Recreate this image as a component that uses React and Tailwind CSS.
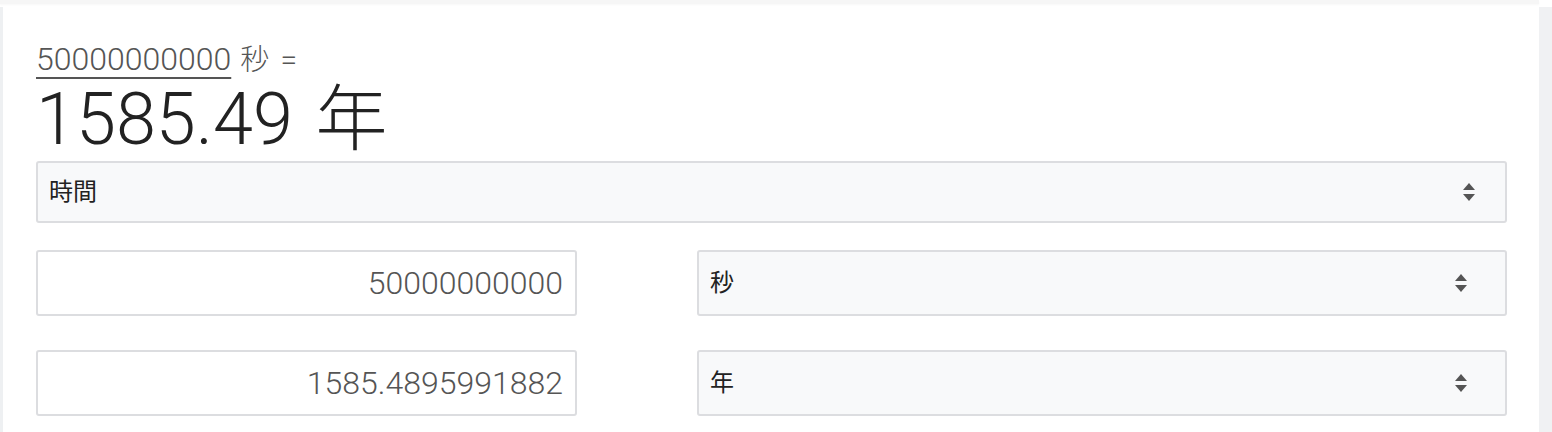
import React from "react";

const font = { fontFamily: '"Liberation Sans", "Noto Sans CJK JP", sans-serif' };
const light = { fontFamily: 'Roboto, "Noto Sans CJK JP", sans-serif' };

const Arrows = () => (
  <svg width="12" height="18" viewBox="0 0 12 18" className="shrink-0">
    <path d="M6 0 L12 7 L0 7 Z" fill="#555" />
    <path d="M0 11 L12 11 L6 18 Z" fill="#555" />
  </svg>
);

const SelectBox = ({ label, className, arrowPad }) => (
  <div
    className={`flex items-center justify-between border-2 border-[#dcdde0] rounded-[3px] bg-[#f8f9fa] pl-[11px] ${arrowPad} ${className}`}
  >
    <span className="text-[24px] leading-none text-[#222]">{label}</span>
    <Arrows />
  </div>
);

const NumberBox = ({ value }) => (
  <div className="flex items-center justify-end border-2 border-[#dcdde0] rounded-[3px] bg-white pr-[12px] h-[66px]">
    <span className="text-[32px] leading-none font-light text-[#555]" style={light}>
      {value}
    </span>
  </div>
);

const App = () => {
  const rows = [
    { value: "50000000000", unit: "秒" },
    { value: "1585.4895991882", unit: "年" },
  ];

  return (
    <div className="h-[432px] w-[1552px] bg-white overflow-hidden" style={font}>
      <div className="h-[4px] w-[1539px] bg-[#f6f6f6] shadow-[0_1px_2px_rgba(0,0,0,0.03)]" />
      <div className="flex mt-[3px] h-[425px]">
        <div className="w-[3px] bg-[#eef0f2]" />
        <div className="flex-1 pt-[36px] pl-[33px] pr-[32px]">
          <div
            className="h-[32px] text-[32px] leading-none font-light text-[#555] whitespace-nowrap"
            style={light}
          >
            <span className="underline decoration-2 underline-offset-[7px]">50000000000</span>
            <span className="text-[29px] ml-[2px]"> 秒 </span>
            <span className="text-[30px] ml-[4px]">=</span>
          </div>
          <div
            className="h-[72px] mt-[9px] text-[72px] leading-none font-light text-[#222] whitespace-nowrap"
            style={light}
          >
            1585.49<span className="ml-[5px]"> 年</span>
          </div>
          <SelectBox label="時間" className="h-[62px] mt-[5px]" arrowPad="pr-[30px]" />
          <div className="flex flex-col gap-[34px] mt-[27px]">
            {rows.map((r) => (
              <div key={r.unit} className="grid grid-cols-[541px_1fr] gap-[120px]">
                <NumberBox value={r.value} />
                <SelectBox label={r.unit} className="h-[66px]" arrowPad="pr-[38px]" />
              </div>
            ))}
          </div>
        </div>
        <div className="w-[13px] bg-[#f0f1f3]" />
      </div>
    </div>
  );
};

export default App;
